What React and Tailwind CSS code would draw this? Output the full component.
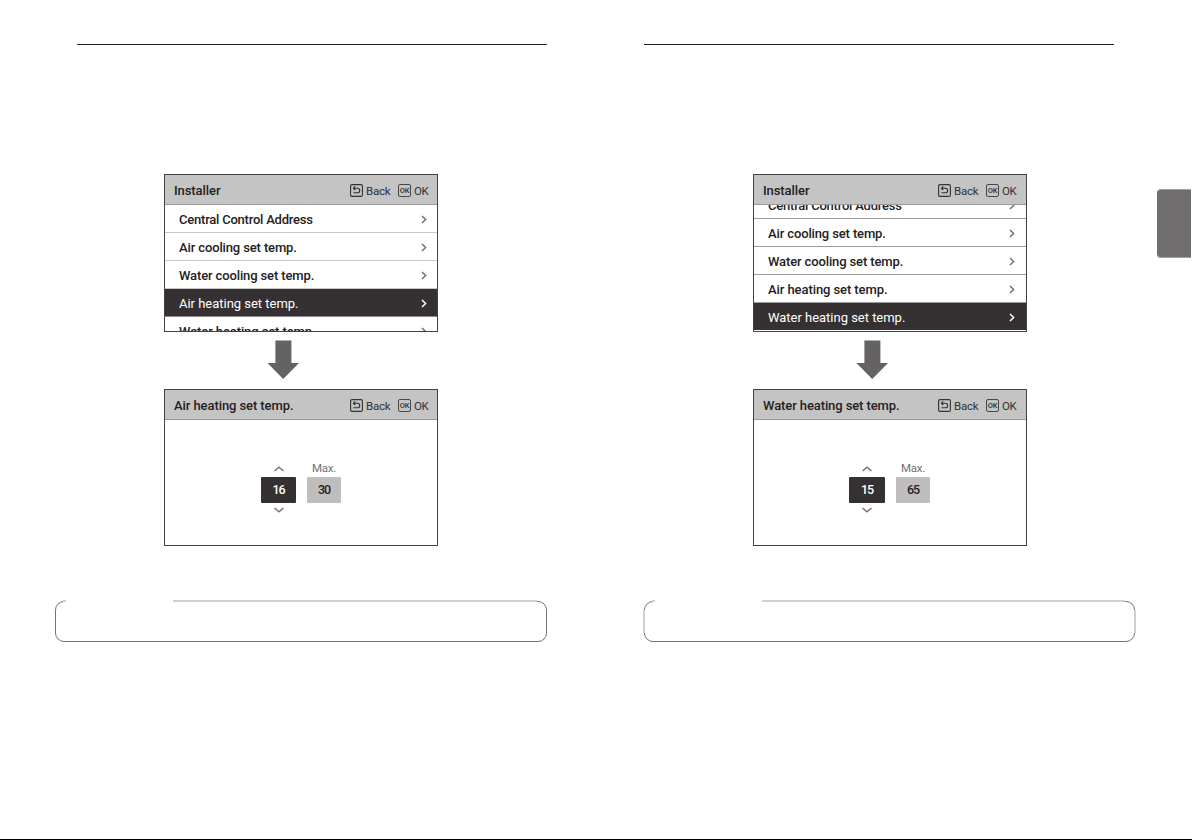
import React from "react";

function BackIcon() {
  return (
    <svg width="13" height="13" viewBox="0 0 13 13" fill="none" stroke="#353233" className="block shrink-0">
      <rect x="0.6" y="0.6" width="11.8" height="11.8" rx="1.4" strokeWidth="1.1" />
      <path d="M5.2 2.4 L3.4 4.2 L5.2 6 M3.6 4.2 H7.4 A2.3 2.3 0 0 1 7.4 8.8 H3.4" strokeWidth="1.1" />
    </svg>
  );
}

function OkIcon() {
  return (
    <span className="flex h-[13px] w-[13px] shrink-0 items-center justify-center rounded-[2px] border border-[#4a4748] text-[7.5px] leading-none font-medium tracking-[-0.3px] text-[#353233]">
      OK
    </span>
  );
}

function Header({ title, shift, titleSpacing }) {
  return (
    <div className="relative z-10 flex h-[30px] shrink-0 items-center border-b border-[#9b9999] bg-[#c4c4c4] pt-[2px] pl-[9px] text-[#242122]">
      <span className={`flex-1 text-[13px] leading-4 font-medium whitespace-nowrap ${titleSpacing}`}>{title}</span>
      <div className={`flex items-center text-[11.5px] leading-4 text-[#353233] ${shift}`}>
        <BackIcon />
        <span className="ml-[3px] w-8 tracking-[-0.2px]">Back</span>
        <OkIcon />
        <span className="ml-[3px] w-[23px] tracking-[-0.5px]">OK</span>
      </div>
    </div>
  );
}

function Row({ label, selected, line, spacing, arrowPad }) {
  return (
    <div
      className={`flex h-7 shrink-0 items-center justify-between border-b pt-[2px] pl-[14px] ${arrowPad} ${line} ${
        selected ? "bg-[#353132] text-white" : "bg-white text-[#242122]"
      }`}
    >
      <span className={`text-[13px] leading-4 whitespace-nowrap ${selected ? "font-normal tracking-[-0.02px]" : `font-medium ${spacing}`}`}>{label}</span>
      <svg width="6" height="9" viewBox="0 0 6 9" fill="none" stroke={selected ? "#fff" : "#737071"} strokeWidth="1.5" className="block">
        <path d="M1 1 L4.6 4.5 L1 8" />
      </svg>
    </div>
  );
}

function Arrow() {
  return (
    <svg width="32" height="39" viewBox="0 0 32 39" fill="#656263" className="block">
      <path d="M8.4 0.4 H24.4 V23 H32 L16.2 39 L0.4 23 H8.4 Z" />
    </svg>
  );
}

function Chevron({ up }) {
  return (
    <svg width="10" height="6" viewBox="0 0 10 6" fill="none" stroke="#737071" strokeWidth="1.4" className="block">
      <path d={up ? "M0.5 5 L5 1.2 L9.5 5" : "M0.5 1 L5 4.8 L9.5 1"} />
    </svg>
  );
}

function Setting({ title, value, max, shift, pad, box, titleSpacing }) {
  return (
    <section className="flex h-[157px] w-[274px] flex-col border border-[#454243] bg-white">
      <Header title={title} shift={shift} titleSpacing={titleSpacing} />
      <div className={`flex gap-[11px] pt-[46px] ${pad}`}>
        <div className={`flex flex-col items-center ${box}`}>
          <Chevron up />
          <div className="mt-[5px] flex h-[26px] w-full items-center justify-center rounded-[1px] bg-[#353132] pt-px text-[12.5px] font-medium tracking-[-1.2px] text-white">
            {value}
          </div>
          <div className="mt-[4px]">
            <Chevron />
          </div>
        </div>
        <div className="-mt-[8px] flex w-[34px] flex-col items-center">
          <div className="h-[19px] pt-px text-[11.5px] leading-[19px] tracking-[-0.3px] text-[#737071]">Max.</div>
          <div className="flex h-[26px] w-full items-center justify-center rounded-[1px] bg-[#bfbdbe] pt-px text-[12.5px] font-medium tracking-[-1.2px] text-[#242122]">
            {max}
          </div>
        </div>
      </div>
    </section>
  );
}

function Note({ className, children }) {
  return (
    <div className={`relative h-[41px] rounded-[9px] border border-[#757374] ${className}`}>
      <div className="absolute -top-[2px] left-[10px] h-[4px] w-[107px] bg-white" />
      <div className="absolute -top-[2px] right-[9px] left-[117px] h-[2px] bg-[#cfcfcf]" />
      <div className="absolute -top-[2px] left-[7px] h-[2px] w-[3px] bg-[#cfcfcf]" />
      {children}
    </div>
  );
}

const items = [
  ["Central Control Address", "tracking-[-0.22px]"],
  ["Air cooling set temp.", "tracking-[-0.13px]"],
  ["Water cooling set temp.", "tracking-[-0.13px]"],
  ["Air heating set temp.", "tracking-[-0.08px]"],
  ["Water heating set temp.", "tracking-[-0.1px]"],
];

export default function App() {
  return (
    <main className="relative flex h-[840px] w-[1192px] overflow-hidden border-b border-black bg-white font-['Roboto',sans-serif]">
      <article className="flex w-[589px] shrink-0 flex-col pt-[44px]">
        <div className="ml-[77px] h-px w-[470px] bg-[#231f20]" />
        <div className="mt-[129px] ml-[164px] flex w-[274px] flex-col">
          <section className="flex h-[158px] flex-col overflow-hidden border border-[#454243]">
            <Header title="Installer" shift="" titleSpacing="tracking-[-0.08px]" />
            {items.map(([label, spacing], i) => (
              <Row key={label} label={label} spacing={spacing} selected={i === 3} line={i === 3 ? "border-[#8a8889]" : "border-[#c8c8c8]"} arrowPad="pr-[10px]" />
            ))}
          </section>
          <div className="mt-2 ml-[103px] h-[49px]"><Arrow /></div>
          <Setting title="Air heating set temp." value="16" max="30" shift="" pad="pl-[96px]" box="w-[35px]" titleSpacing="tracking-[-0.08px]" />
        </div>
        <Note className="mt-[55px] ml-[55px] w-[492px]" />
      </article>
      <article className="flex flex-1 flex-col pt-[44px]">
        <div className="ml-[55px] h-px w-[470px] bg-[#231f20]" />
        <div className="mt-[129px] ml-[164px] flex w-[274px] flex-col">
          <section className="flex h-[158px] flex-col overflow-hidden border border-[#454243]">
            <Header title="Installer" shift="mr-px" titleSpacing="tracking-[-0.08px]" />
            <div className="-mt-[14px] flex flex-col">
              {items.map(([label, spacing], i) => (
                <Row key={label} label={label} spacing={spacing} selected={i === 4} line={i === 4 ? "border-white" : "border-[#9c9a9b]"} arrowPad="pr-[11px]" />
              ))}
            </div>
          </section>
          <div className="mt-2 ml-[103px] h-[49px]"><Arrow /></div>
          <Setting title="Water heating set temp." value="15" max="65" shift="mr-px" pad="pl-[95px]" box="w-[36px]" titleSpacing="tracking-[-0.1px]" />
        </div>
        <Note className="mt-[55px] ml-[55px] w-[491px]">
          <div className="absolute top-[8px] bottom-[8px] -left-[2px] w-[2px] bg-[#cfcfcf]" />
          <div className="absolute top-[8px] -right-[2px] bottom-[8px] w-[2px] bg-[#cfcfcf]" />
        </Note>
      </article>
      <div className="absolute top-[189px] right-px h-[69px] w-[34px] rounded-l-[4px] border-y border-[#a3a1a2] bg-[#706d6e]" />
    </main>
  );
}
